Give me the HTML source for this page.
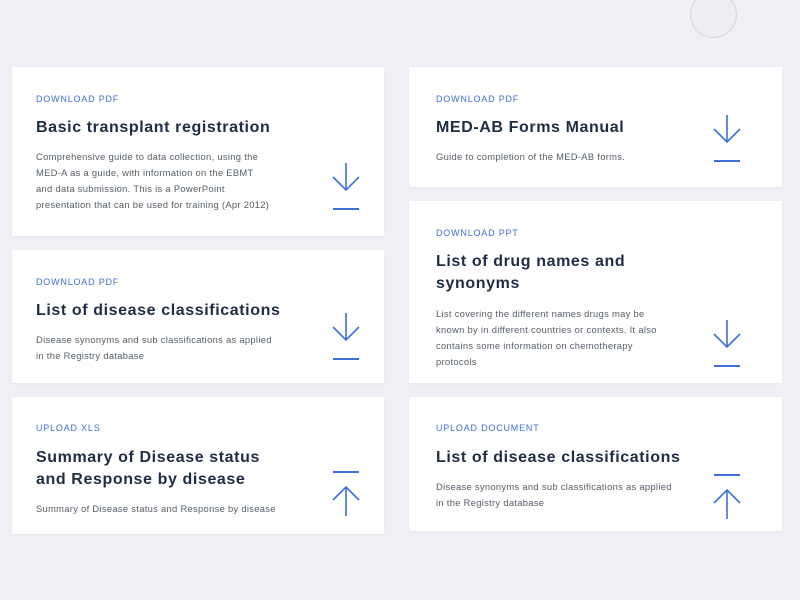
<!DOCTYPE html>
<html><head><style>
body{margin:0;width:800px;height:600px;background:#eef0f5;position:relative;overflow:hidden;font-family:"Liberation Sans",sans-serif}
.c{position:absolute;background:#fff;box-shadow:0 1px 3px rgba(0,0,0,0.04)}
.l{position:absolute;left:24px;font-size:9px;letter-spacing:0.8px;color:#3f6fd8}
.t{position:absolute;left:24px;font-size:16px;font-weight:bold;color:#1f2d44;line-height:22px;letter-spacing:0.6px;white-space:nowrap}
.d{position:absolute;left:24px;width:320px;font-size:9.4px;line-height:16px;color:#555d69;letter-spacing:0.3px;white-space:nowrap}
svg{position:absolute}
.circ{position:absolute;left:690px;top:-9px;width:45px;height:45px;border-radius:50%;border:1.5px solid #d4d6dc;background:#edeef1}
</style></head><body>
<div class="circ"></div>

<div class="c" style="left:12px;top:67px;width:372px;height:169px">
<div class="l" style="top:27px">DOWNLOAD PDF</div>
<div class="t" style="top:50px">Basic transplant registration</div>
<div class="d" style="top:82px">Comprehensive guide to data collection, using the<br>MED-A as a guide, with information on the EBMT<br>and data submission. This is a PowerPoint<br>presentation that can be used for training (Apr 2012)</div>
<svg style="left:320px;top:96px" width="28" height="50"><path d="M14 0V27M1 14L14 27L27 14" stroke="#3f6fd8" stroke-width="1.6" fill="none"/><path d="M1 46H27" stroke="#3f6fd8" stroke-width="2"/></svg>
</div>

<div class="c" style="left:12px;top:250px;width:372px;height:133px">
<div class="l" style="top:27px">DOWNLOAD PDF</div>
<div class="t" style="top:50px">List of disease classifications</div>
<div class="d" style="top:82px">Disease synonyms and sub classifications as applied<br>in the Registry database</div>
<svg style="left:320px;top:63px" width="28" height="50"><path d="M14 0V27M1 14L14 27L27 14" stroke="#3f6fd8" stroke-width="1.6" fill="none"/><path d="M1 46H27" stroke="#3f6fd8" stroke-width="2"/></svg>
</div>

<div class="c" style="left:12px;top:397px;width:372px;height:137px">
<div class="l" style="top:26px">UPLOAD XLS</div>
<div class="t" style="top:50px">Summary of Disease status<br>and Response by disease</div>
<div class="d" style="top:104px">Summary of Disease status and Response by disease</div>
<svg style="left:320px;top:73px" width="28" height="50"><path d="M1 2H27" stroke="#3f6fd8" stroke-width="2"/><path d="M14 46V18M1 30L14 17L27 30" stroke="#3f6fd8" stroke-width="1.6" fill="none"/></svg>
</div>

<div class="c" style="left:409px;top:67px;width:373px;height:120px">
<div class="l" style="top:27px;left:27px">DOWNLOAD PDF</div>
<div class="t" style="top:50px;left:27px">MED-AB Forms Manual</div>
<div class="d" style="top:82px;left:27px">Guide to completion of the MED-AB forms.</div>
<svg style="left:304px;top:48px" width="28" height="50"><path d="M14 0V27M1 14L14 27L27 14" stroke="#3f6fd8" stroke-width="1.6" fill="none"/><path d="M1 46H27" stroke="#3f6fd8" stroke-width="2"/></svg>
</div>

<div class="c" style="left:409px;top:201px;width:373px;height:182px">
<div class="l" style="top:27px;left:27px">DOWNLOAD PPT</div>
<div class="t" style="top:50px;left:27px">List of drug names and<br>synonyms</div>
<div class="d" style="top:105px;left:27px">List covering the different names drugs may be<br>known by in different countries or contexts. It also<br>contains some information on chemotherapy<br>protocols</div>
<svg style="left:304px;top:119px" width="28" height="50"><path d="M14 0V27M1 14L14 27L27 14" stroke="#3f6fd8" stroke-width="1.6" fill="none"/><path d="M1 46H27" stroke="#3f6fd8" stroke-width="2"/></svg>
</div>

<div class="c" style="left:409px;top:397px;width:373px;height:134px">
<div class="l" style="top:26px;left:27px">UPLOAD DOCUMENT</div>
<div class="t" style="top:50px;left:27px">List of disease classifications</div>
<div class="d" style="top:82px;left:27px">Disease synonyms and sub classifications as applied<br>in the Registry database</div>
<svg style="left:304px;top:76px" width="28" height="50"><path d="M1 2H27" stroke="#3f6fd8" stroke-width="2"/><path d="M14 46V18M1 30L14 17L27 30" stroke="#3f6fd8" stroke-width="1.6" fill="none"/></svg>
</div>
</body></html>
